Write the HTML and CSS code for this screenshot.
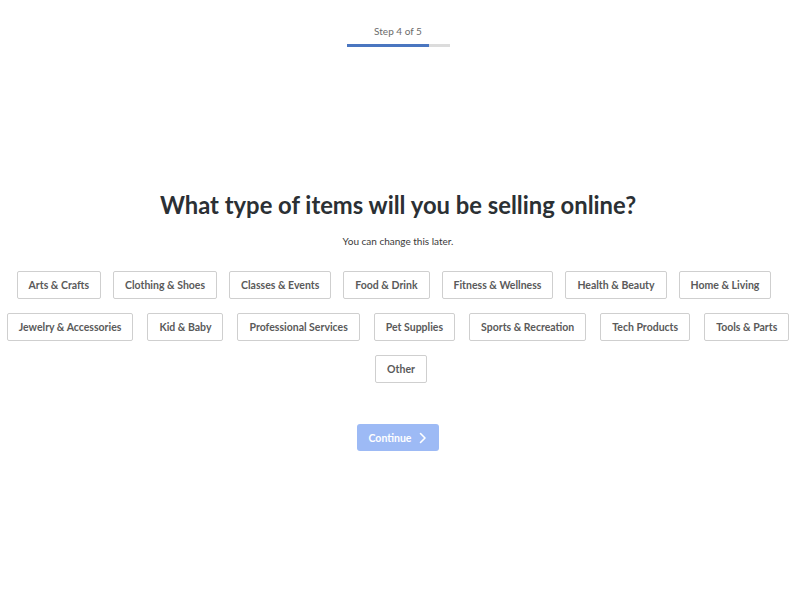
FILE: index.html
```html
<!DOCTYPE html>
<html lang="en">
<head>
<meta charset="utf-8">
<title>Step 4 of 5</title>
<link rel="stylesheet" href="styles.css">
</head>
<body>
<div class="page">
  <div class="progress">
    <div class="step-label">Step 4 of 5</div>
    <div class="track"><div class="fill"></div></div>
  </div>
  <h1 class="title">What type of items will you be selling online?</h1>
  <p class="subtitle">You can change this later.</p>
  <div class="chips">
    <div class="row row-a">
      <button class="chip">Arts &amp; Crafts</button>
      <button class="chip">Clothing &amp; Shoes</button>
      <button class="chip">Classes &amp; Events</button>
      <button class="chip">Food &amp; Drink</button>
      <button class="chip">Fitness &amp; Wellness</button>
      <button class="chip">Health &amp; Beauty</button>
      <button class="chip">Home &amp; Living</button>
    </div>
    <div class="row row-b">
      <button class="chip">Jewelry &amp; Accessories</button>
      <button class="chip">Kid &amp; Baby</button>
      <button class="chip">Professional Services</button>
      <button class="chip">Pet Supplies</button>
      <button class="chip">Sports &amp; Recreation</button>
      <button class="chip">Tech Products</button>
      <button class="chip">Tools &amp; Parts</button>
    </div>
    <div class="row row-c">
      <button class="chip">Other</button>
    </div>
  </div>
  <div class="actions">
    <button class="continue">Continue
      <svg class="chev" width="8" height="12" viewBox="0 0 8 12"><path d="M1.5 1.5 L6 6 L1.5 10.5" fill="none" stroke="#fff" stroke-width="1.6" stroke-linecap="round" stroke-linejoin="round"/></svg>
    </button>
  </div>
</div>
</body>
</html>
```
FILE: styles.css
```css
* { box-sizing: border-box; }
html, body { margin: 0; padding: 0; background: #fff; }
body { font-family: "Lato", "Open Sans", sans-serif; color: #2b3034; }
.page { display: flex; flex-direction: column; align-items: center; padding-top: 24px; padding-right: 4px; }
.progress { display: flex; flex-direction: column; align-items: center; }
.step-label { font-size: 10px; line-height: 14px; color: #6b6b6b; }
.track { width: 103px; height: 3px; background: #dcdcdc; margin-top: 6px; }
.fill { width: 80%; height: 100%; background: #4a76c0; }
.title { margin: 143px 0 0; font-size: 23.8px; line-height: 30px; font-weight: 700; color: #2b3034; }
.subtitle { margin: 14px 0 0; font-size: 10px; line-height: 14px; color: #3a3a3a; }
.chips { margin-top: 23px; display: flex; flex-direction: column; align-items: center; gap: 14px; }
.row { display: flex; gap: 13px; justify-content: center; }
.row-a { gap: 12px; padding-right: 8px; }
.row-b { gap: 14px; }
.row-c { padding-left: 6px; }
.chip { height: 28px; padding: 0 11px; border: 1px solid #cfcfcf; border-radius: 2px; background: #fff; font-family: inherit; font-size: 10.5px; font-weight: 700; color: #5a5a5a; white-space: nowrap; }
.actions { margin-top: 41px; }
.continue { height: 27px; width: 82px; border: 0; border-radius: 3px; background: #9dbaf5; color: #fff; font-family: inherit; font-size: 10.5px; font-weight: 700; display: flex; align-items: center; justify-content: center; gap: 8px; }
.chev { display: block; }
```
